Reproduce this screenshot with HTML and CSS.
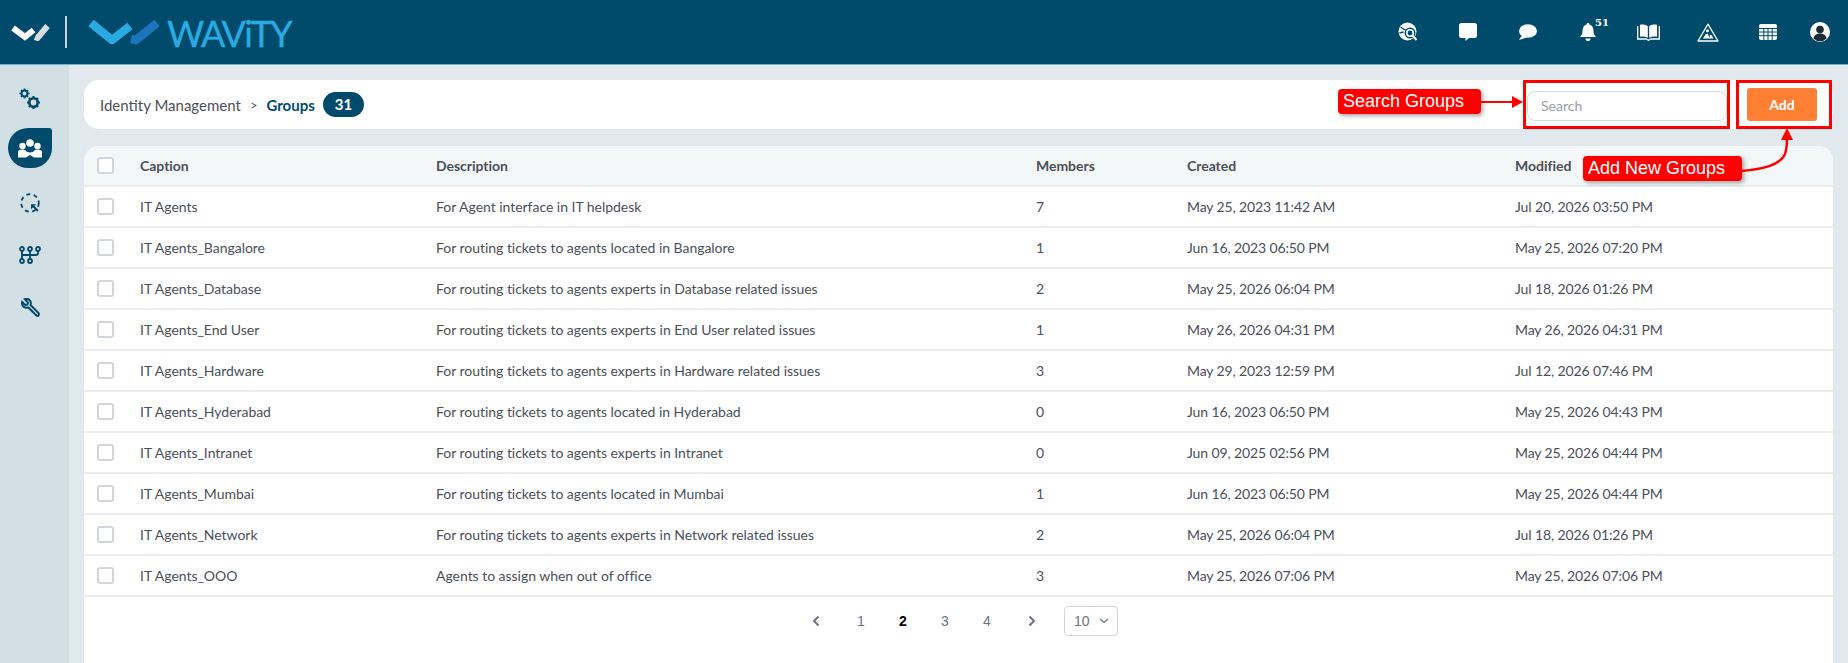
FILE: index.html
```html
<!DOCTYPE html>
<html lang="en">
<head>
    <meta charset="UTF-8">
    <meta name="viewport" content="width=device-width, initial-scale=1.0">
    <title>Wavity | Groups</title>
    <link rel="stylesheet" href="styles.css">
</head>
<body>

    <header class="topbar">
        <div class="brand">
            <svg class="brand-mark" width="40" height="18" viewBox="0 0 40 18">
                <path d="M3 5l12 9 8.500-7" fill="none" stroke="#fff" stroke-width="6"/>
                <path d="M25 14l2.500 1 10-12" fill="none" stroke="#d9dcdc" stroke-width="6"/>
            </svg>
            <span class="brand-rule"></span>
            <svg class="brand-logo" width="76" height="30" viewBox="0 0 76 30">
                <path d="M5 6l21 17 18-14" fill="none" stroke="#29abe2" stroke-width="8.500" stroke-linejoin="round"/>
                <path d="M45 22l5 1 21-17" fill="none" stroke="#1b75bc" stroke-width="8.500" stroke-linejoin="round"/>
            </svg>
            <span class="brand-name">WAViTY</span>
        </div>
        <nav class="top-icons">
            <div class="top-slot">
                <svg width="20" height="20" viewBox="0 0 20 20"><circle cx="9.500" cy="9.500" r="9" fill="#fff"/><circle cx="12" cy="11" r="5.500" fill="#004b6b"/><circle cx="12" cy="11" r="3.200" fill="none" stroke="#fff" stroke-width="1.600"/><path d="M14.500 13.500l4 4.500" stroke="#fff" stroke-width="2"/><path d="M2.500 5l5 3M1.500 11l4-1" stroke="#004b6b" stroke-width="1.300"/></svg>
            </div>
            <div class="top-slot">
                <svg width="18" height="18" viewBox="0 0 18 18"><path d="M2.500 0h13A2.500 2.500 0 0118 2.500v10a2.500 2.500 0 01-2.500 2.500H10l-3.500 3v-3h-4A2.500 2.500 0 010 12.500v-10A2.500 2.500 0 012.500 0z" fill="#fff"/></svg>
            </div>
            <div class="top-slot">
                <svg width="18" height="16" viewBox="0 0 18 16"><ellipse cx="9" cy="7" rx="9" ry="6.800" fill="#fff"/><path d="M3.500 10.500L0 16l7.500-2.500z" fill="#fff"/></svg>
            </div>
            <div class="top-slot bell">
                <svg width="16" height="19" viewBox="0 0 16 19"><path d="M8 0a1.400 1.400 0 011.400 1.500C12 2.200 13.500 4.500 13.500 8c0 3 1 4.500 2.500 6H0c1.500-1.500 2.500-3 2.500-6 0-3.500 1.500-5.800 4.100-6.500A1.400 1.400 0 018 0z" fill="#fff"/><path d="M5.500 15.500h5a2.500 2.500 0 01-5 0z" fill="#fff"/></svg>
                <span class="bell-count">51</span>
            </div>
            <div class="top-slot">
                <svg width="23" height="17" viewBox="0 0 23 17"><path d="M.7 2v13h8.500l2.300 1.300L13.800 15h8.500V2" fill="none" stroke="#fff" stroke-width="1.300"/><path d="M3 .8c3-.5 6.200 0 7.800 1.400v11.600c-2-1-5-1.400-7.800-1.100zM20 .8c-3-.5-6.200 0-7.800 1.400v11.600c2-1 5-1.400 7.800-1.100z" fill="#fff"/></svg>
            </div>
            <div class="top-slot">
                <svg width="22" height="19" viewBox="0 0 22 19"><path d="M11 1.200L21 18H1z" fill="none" stroke="#fff" stroke-width="1.300" stroke-linejoin="round"/><circle cx="10.500" cy="7.800" r="1.500" fill="#fff"/><path d="M6 15.500l2.500-4 2-1 1.500 3 1 2z" fill="#fff"/><path d="M13 11.500l1.800 1 1.700 3h-4z" fill="#fff"/></svg>
            </div>
            <div class="top-slot">
                <svg width="18" height="16" viewBox="0 0 18 16"><rect width="18" height="16" rx="2" fill="#fff"/><path d="M0 4.500h18M0 8h18M0 11.700h18M4.800 4v12M9 4v12M13.200 4v12" stroke="#004b6b" stroke-width="1"/></svg>
            </div>
            <div class="top-slot top-slot-user">
                <svg width="20" height="20" viewBox="0 0 20 20"><circle cx="10" cy="10" r="10" fill="#fff"/><circle cx="10" cy="7.500" r="3.800" fill="#1f2a33"/><path d="M3.500 16.500c.5-3.500 3-5 6.500-5s6 1.500 6.500 5a9 9 0 01-13 0z" fill="#1f2a33"/></svg>
            </div>
        </nav>
    </header>

    <div class="layout">
        <aside class="sidebar">
            <a class="side-item">
                <svg width="22" height="22" viewBox="0 0 22 22" fill="none" stroke="#004b6b"><circle cx="5.500" cy="5.500" r="3" stroke-width="2"/><path d="M5.500 .5v1.500M5.500 9v1.500M.5 5.500H2M9 5.500h1.500M2 2l1 1M8 8l1 1M9 2L8 3M3 8L2 9" stroke-width="1.700"/><circle cx="14.500" cy="14.500" r="4.200" stroke-width="2.600"/><path d="M14.500 8v2.500M14.500 18.500V21M8 14.500h2.500M18.500 14.500H21M10 10l1.500 1.500M17.500 17.500L19 19M19 10l-1.500 1.500M11.500 17.500L10 19" stroke-width="2.200"/></svg>
            </a>
            <a class="side-item active">
                <svg width="24" height="19" viewBox="0 0 24 19" fill="#fff"><circle cx="12" cy="4" r="3.800"/><circle cx="4.500" cy="7" r="3.200"/><circle cx="19.500" cy="7" r="3.200"/><path d="M0 18.500v-5.500c0-1.500 1.500-2.500 4.500-2.500 1.500 0 2.500.3 3 1 1.300 2.500 7.700 2.500 9 0 .5-.7 1.500-1 3-1 3 0 4.500 1 4.500 2.500v5.500h-8l-4-2.500-4 2.500z"/></svg>
            </a>
            <a class="side-item">
                <svg width="20" height="20" viewBox="0 0 20 20" fill="none" stroke="#004b6b" stroke-width="1.800"><circle cx="10" cy="10" r="8.800" stroke-dasharray="4 3.500"/><path d="M18 18l-5.500-5.500" stroke-width="2"/><path d="M11 11.200h5l-5 5z" fill="#004b6b" stroke="none"/></svg>
            </a>
            <a class="side-item">
                <svg width="22" height="18" viewBox="0 0 22 18" fill="none" stroke="#004b6b" stroke-width="1.800"><circle cx="3" cy="3" r="2"/><circle cx="11" cy="3" r="2"/><circle cx="19" cy="3" r="2"/><circle cx="3" cy="15" r="2"/><circle cx="11" cy="15" r="2"/><path d="M3 5v8M11 5v8M3 9h14c1.500 0 2-1 2-2V5"/></svg>
            </a>
            <a class="side-item">
                <svg width="19" height="19" viewBox="0 0 19 19" fill="none" stroke="#004b6b" stroke-width="2"><path d="M17.500 15l-8-8c.8-2.500 0-4.500-1.500-5.500C6.500.8 5 .8 3.800 1.200L7 4.500l-.6 2-2 .6-3.200-3.200c-.4 1.500-.2 3 .8 4.300 1.200 1.500 3.200 2 5.400 1.300l8 8c.8.6 1.500.6 2 0 .6-.6.6-1.700.1-2.500z"/></svg>
            </a>
        </aside>

        <main class="content">
            <section class="toolbar">
                <div class="crumbs">
                    <span>Identity Management</span>
                    <span class="crumb-sep">&gt;</span>
                    <b class="crumb-current">Groups</b>
                    <span class="count-pill">31</span>
                </div>
                <div class="toolbar-actions">
                    <input class="search" type="text" placeholder="Search">
                    <button class="add-btn">Add</button>
                </div>
            </section>

            <section class="table-card">
                <table class="groups">
                    <thead>
                        <tr>
                            <th class="col-check"><span class="check"></span></th>
                            <th class="col-caption">Caption</th>
                            <th class="col-desc">Description</th>
                            <th class="col-members">Members</th>
                            <th class="col-created">Created</th>
                            <th>Modified</th>
                        </tr>
                    </thead>
                    <tbody>
                        <tr><td><span class="check"></span></td><td>IT Agents</td><td>For Agent interface in IT helpdesk</td><td>7</td><td class="date">May 25, 2023 11:42 AM</td><td class="date">Jul 20, 2026 03:50 PM</td></tr>
                        <tr><td><span class="check"></span></td><td>IT Agents_Bangalore</td><td>For routing tickets to agents located in Bangalore</td><td>1</td><td class="date">Jun 16, 2023 06:50 PM</td><td class="date">May 25, 2026 07:20 PM</td></tr>
                        <tr><td><span class="check"></span></td><td>IT Agents_Database</td><td>For routing tickets to agents experts in Database related issues</td><td>2</td><td class="date">May 25, 2026 06:04 PM</td><td class="date">Jul 18, 2026 01:26 PM</td></tr>
                        <tr><td><span class="check"></span></td><td>IT Agents_End User</td><td>For routing tickets to agents experts in End User related issues</td><td>1</td><td class="date">May 26, 2026 04:31 PM</td><td class="date">May 26, 2026 04:31 PM</td></tr>
                        <tr><td><span class="check"></span></td><td>IT Agents_Hardware</td><td>For routing tickets to agents experts in Hardware related issues</td><td>3</td><td class="date">May 29, 2023 12:59 PM</td><td class="date">Jul 12, 2026 07:46 PM</td></tr>
                        <tr><td><span class="check"></span></td><td>IT Agents_Hyderabad</td><td>For routing tickets to agents located in Hyderabad</td><td>0</td><td class="date">Jun 16, 2023 06:50 PM</td><td class="date">May 25, 2026 04:43 PM</td></tr>
                        <tr><td><span class="check"></span></td><td>IT Agents_Intranet</td><td>For routing tickets to agents experts in Intranet</td><td>0</td><td class="date">Jun 09, 2025 02:56 PM</td><td class="date">May 25, 2026 04:44 PM</td></tr>
                        <tr><td><span class="check"></span></td><td>IT Agents_Mumbai</td><td>For routing tickets to agents located in Mumbai</td><td>1</td><td class="date">Jun 16, 2023 06:50 PM</td><td class="date">May 25, 2026 04:44 PM</td></tr>
                        <tr><td><span class="check"></span></td><td>IT Agents_Network</td><td>For routing tickets to agents experts in Network related issues</td><td>2</td><td class="date">May 25, 2026 06:04 PM</td><td class="date">Jul 18, 2026 01:26 PM</td></tr>
                        <tr><td><span class="check"></span></td><td>IT Agents_OOO</td><td>Agents to assign when out of office</td><td>3</td><td class="date">May 25, 2026 07:06 PM</td><td class="date">May 25, 2026 07:06 PM</td></tr>
                    </tbody>
                </table>

                <div class="pager">
                    <svg class="pager-prev" width="8" height="12" viewBox="0 0 8 12"><path d="M6.500 1.500L2 6l4.500 4.500" fill="none" stroke="#6b7280" stroke-width="2"/></svg>
                    <span class="page">1</span>
                    <span class="page current">2</span>
                    <span class="page">3</span>
                    <span class="page">4</span>
                    <svg class="pager-next" width="8" height="12" viewBox="0 0 8 12"><path d="M1.500 1.500L6 6l-4.500 4.500" fill="none" stroke="#6b7280" stroke-width="2"/></svg>
                    <div class="page-size">
                        <span>10</span>
                        <svg width="10" height="6" viewBox="0 0 10 6"><path d="M1 1l4 3.500L9 1" fill="none" stroke="#6b7280" stroke-width="1.300"/></svg>
                    </div>
                </div>
            </section>
        </main>
    </div>

    <!-- red annotations drawn over the screenshot -->
    <div class="note-box note-box-search"></div>
    <div class="note-box note-box-add"></div>
    <div class="note-label note-label-search">Search Groups</div>
    <div class="note-label note-label-add">Add New Groups</div>
    <svg class="note-arrows" width="1848" height="663" viewBox="0 0 1848 663">
        <path d="M1480 102H1513" fill="none" stroke="#f00" stroke-width="2"/>
        <path d="M1523 102l-11-6v12z" fill="#f00"/>
        <path d="M1741 171c24-2 37-6 43-15 3-5 3-11 3-18" fill="none" stroke="#f00" stroke-width="2.500"/>
        <path d="M1787 128l-6 12h12z" fill="#f00"/>
    </svg>

</body>
</html>
```

FILE: styles.css
```css
* {
    box-sizing: border-box;
}
body {
    margin: 0;
    height: 663px;
    overflow: hidden;
    font-family: Lato, sans-serif;
    font-size: 14px;
    color: #4a4f5a;
    background-color: #e1e9ef;
}
.topbar {
    display: flex;
    align-items: center;
    justify-content: space-between;
    height: 65px;
    background-color: #004b6b;
    border-bottom: 1px solid #6fb4cc;
}
.brand {
    display: flex;
    align-items: center;
    padding-left: 10px;
}
.brand-rule {
    width: 2px;
    height: 32px;
    margin: 0 19px 0 15px;
    background-color: #c9d3d8;
}
.brand-name {
    margin: 1px 0 0 5px;
    font-size: 36px;
    line-height: 1;
    letter-spacing: -1.8px;
    color: #29abe2;
    -webkit-text-stroke: 0.3px #29abe2;
}
.top-icons {
    display: flex;
    align-items: center;
    padding-right: 6px;
}
.top-slot {
    display: flex;
    align-items: center;
    justify-content: center;
    width: 60px;
    height: 30px;
}
.top-slot-user {
    width: 44px;
}
.bell {
    position: relative;
}
.bell-count {
    position: absolute;
    left: 37px;
    top: 0;
    font-family: "DejaVu Serif", serif;
    font-size: 10px;
    font-weight: bold;
    color: #fff;
}
.layout {
    display: flex;
    height: 598px;
}
.sidebar {
    display: flex;
    flex-direction: column;
    flex: none;
    width: 69px;
    padding: 8px 0 0 8px;
    background-color: #d2dfe4;
}
.side-item {
    display: flex;
    align-items: center;
    justify-content: center;
    width: 44px;
    height: 52px;
}
.side-item.active {
    height: 40px;
    margin: 3px 0 9px;
    background-color: #004b6b;
    border-radius: 20px 3px 20px 20px;
}
.content {
    flex: 1;
    padding: 15px 15px 0 15px;
}
.toolbar {
    display: flex;
    align-items: center;
    justify-content: space-between;
    height: 49px;
    padding: 0 0 0 16px;
    background-color: #fff;
    border-radius: 15px;
}
.crumbs {
    display: flex;
    align-items: center;
    font-size: 15px;
}
.crumb-sep {
    margin: 0 9px;
    font-size: 13px;
}
.crumb-current {
    color: #004b6b;
}
.count-pill {
    margin-left: 8px;
    padding: 0 12px;
    line-height: 25px;
    font-weight: bold;
    color: #fff;
    background-color: #004b6b;
    border-radius: 13px;
}
.toolbar-actions {
    display: flex;
    align-items: center;
    padding-right: 16px;
}
.search {
    width: 200px;
    height: 30px;
    margin-top: 2px;
    padding: 0 13px;
    font-family: Lato, sans-serif;
    font-size: 14px;
    border: 1px solid #d6d9dd;
    border-radius: 8px;
}
.search::placeholder {
    color: #9a9da3;
}
.add-btn {
    width: 70px;
    height: 33px;
    margin-left: 20px;
    font-family: Lato, sans-serif;
    font-size: 14px;
    font-weight: bold;
    color: #fff;
    background-color: #ff7f35;
    border: none;
    border-radius: 3px;
}
.table-card {
    height: 517px;
    margin-top: 17px;
    background-color: #fff;
    border-radius: 15px 15px 0 0;
}
.groups {
    width: 100%;
    border-collapse: collapse;
    table-layout: fixed;
    letter-spacing: -0.03px;
}
.groups thead tr {
    height: 40px;
    background-color: #f3f7f8;
}
.groups th {
    font-weight: bold;
    text-align: left;
}
.groups th:first-child {
    border-radius: 15px 0 0 0;
}
.groups th:last-child {
    border-radius: 0 15px 0 0;
}
.groups tr {
    height: 41px;
    border-bottom: 2px solid #e9edf0;
}
.groups th, .groups td {
    padding: 0;
    white-space: nowrap;
}
.groups .date {
    letter-spacing: -0.12px;
}
.col-check { width: 56px; }
.col-caption { width: 296px; }
.col-desc { width: 600px; }
.col-members { width: 151px; }
.col-created { width: 328px; }
.check {
    display: block;
    width: 17px;
    height: 17px;
    margin-left: 13px;
    background-color: #fff;
    border: 2px solid #d2d5da;
    border-radius: 3px;
}
.pager {
    display: flex;
    align-items: center;
    justify-content: center;
    height: 48px;
    padding-left: 13px;
    color: #6b7280;
    font-family: "Liberation Sans", sans-serif;
    font-size: 14px;
}
.page {
    width: 42px;
    text-align: center;
}
.page.current {
    font-weight: bold;
    color: #000;
}
.pager-prev {
    margin-right: 20px;
}
.pager-next {
    margin: 0 14px 0 20px;
}
.page-size {
    display: flex;
    align-items: center;
    justify-content: space-between;
    width: 54px;
    height: 30px;
    margin-left: 14px;
    padding: 0 8px 0 9px;
    border: 1px solid #d2d5da;
    border-radius: 4px;
}
.note-box {
    position: absolute;
    border: 3px solid #f00;
}
.note-box-search {
    left: 1523px;
    top: 80px;
    width: 207px;
    height: 49px;
}
.note-box-add {
    left: 1736px;
    top: 80px;
    width: 96px;
    height: 49px;
}
.note-label {
    position: absolute;
    height: 25px;
    padding: 0 5px;
    font-family: "Liberation Sans", sans-serif;
    font-size: 18px;
    line-height: 25px;
    color: #fff;
    background-color: #f00;
    border-radius: 4px;
    box-shadow: 2px 2px 4px rgba(0, 0, 0, 0.35);
}
.note-label-search {
    left: 1338px;
    top: 89px;
    width: 143px;
}
.note-label-add {
    left: 1583px;
    top: 156px;
    width: 159px;
}
.note-arrows {
    position: absolute;
    left: 0;
    top: 0;
    pointer-events: none;
}
```
